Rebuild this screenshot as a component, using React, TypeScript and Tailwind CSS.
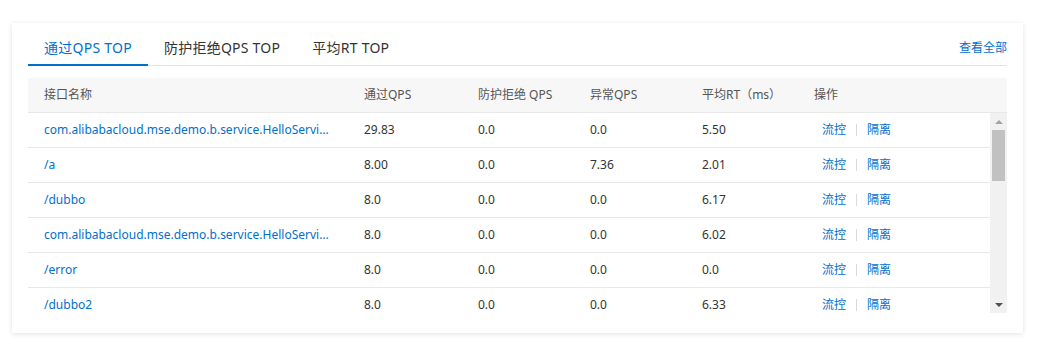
import React from 'react';

interface Row {
  name: string;
  pass: string;
  block: string;
  error: string;
  rt: string;
}

const rows: Row[] = [
  { name: 'com.alibabacloud.mse.demo.b.service.HelloServi…', pass: '29.83', block: '0.0', error: '0.0', rt: '5.50' },
  { name: '/a', pass: '8.00', block: '0.0', error: '7.36', rt: '2.01' },
  { name: '/dubbo', pass: '8.0', block: '0.0', error: '0.0', rt: '6.17' },
  { name: 'com.alibabacloud.mse.demo.b.service.HelloServi…', pass: '8.0', block: '0.0', error: '0.0', rt: '6.02' },
  { name: '/error', pass: '8.0', block: '0.0', error: '0.0', rt: '0.0' },
  { name: '/dubbo2', pass: '8.0', block: '0.0', error: '0.0', rt: '6.33' },
];

const tabs = ['通过QPS TOP', '防护拒绝QPS TOP', '平均RT TOP'];

const cols = 'grid grid-cols-[320px_114px_112px_112px_112px_1fr]';

export default function App() {
  return (
    <div
      className="min-h-[348px] bg-white pt-[23px] pl-[12px]"
      style={{ fontFamily: '"Noto Sans", "Noto Sans CJK SC", sans-serif' }}
    >
      <div className="w-[1011px] bg-white shadow-[0_1px_5px_rgba(0,0,0,0.12)] px-4 pt-[7px] pb-[20px]">
        {/* tabs */}
        <div className="flex items-center border-b border-[#e3e3e3] h-[36px]">
          {tabs.map((t, i) => (
            <div
              key={t}
              className={
                i === 0
                  ? 'relative h-full flex items-center px-4 text-[14px] tracking-[0.25px] text-[#0070cc]'
                  : 'relative h-full flex items-center px-4 text-[14px] tracking-[0.25px] text-[#333]'
              }
            >
              {t}
              {i === 0 && <span className="absolute left-0 right-0 -bottom-px h-[2px] bg-[#0070cc]" />}
            </div>
          ))}
          <span className="ml-auto text-[12px] text-[#0070cc]">查看全部</span>
        </div>

        {/* table */}
        <div className="mt-[12px] text-[12px]">
          <div className={`${cols} h-[35px] items-center bg-[#f7f7f7] text-[#555] border-b border-[#e8e8e8]`}>
            <div className="px-4">接口名称</div>
            <div className="px-4">通过QPS</div>
            <div className="px-4">防护拒绝 QPS</div>
            <div className="px-4">异常QPS</div>
            <div className="px-4">平均RT（ms）</div>
            <div className="px-4">操作</div>
          </div>

          <div className="flex h-[200px]">
            <div className="flex-1 overflow-hidden">
              {rows.map((r, i) => (
                <div key={i} className={`${cols} h-[35px] items-center border-b border-[#e8e8e8] text-[#333]`}>
                  <div className="px-4 whitespace-nowrap text-[#0070cc]">{r.name}</div>
                  <div className="px-4">{r.pass}</div>
                  <div className="px-4">{r.block}</div>
                  <div className="px-4">{r.error}</div>
                  <div className="px-4">{r.rt}</div>
                  <div className="pl-6 flex items-center text-[#0070cc]">
                    <span>流控</span>
                    <span className="mx-[10px] w-px h-[12px] bg-[#d9d9d9]" />
                    <span>隔离</span>
                  </div>
                </div>
              ))}
            </div>
            {/* scrollbar */}
            <div className="w-[17px] bg-[#f1f1f1] flex flex-col items-center">
              <div className="h-[17px] flex items-center justify-center">
                <span className="w-0 h-0 border-l-[4px] border-r-[4px] border-b-[4px] border-l-transparent border-r-transparent border-b-[#a3a3a3]" />
              </div>
              <div className="w-[13px] h-[51px] bg-[#c1c1c1]" />
              <div className="flex-1" />
              <div className="h-[17px] flex items-center justify-center">
                <span className="w-0 h-0 border-l-[4px] border-r-[4px] border-t-[4px] border-l-transparent border-r-transparent border-t-[#505050]" />
              </div>
            </div>
          </div>
        </div>
      </div>
    </div>
  );
}
